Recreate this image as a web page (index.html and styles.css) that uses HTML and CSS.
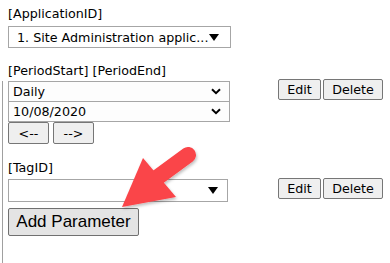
FILE: index.html
```html
<!DOCTYPE html>
<html lang="en">
<head>
    <meta charset="UTF-8">
    <meta name="viewport" content="width=device-width, initial-scale=1.0">
    <title>Parameters</title>
    <link rel="stylesheet" href="styles.css">
</head>
<body>
    <div class="page">
        <div class="label">[ApplicationID]</div>
        <div class="select-wrap app">
            <select class="sel sel-app">
                <option>1. Site Administration applic...</option>
            </select>
            <svg class="tri" width="10" height="7" viewBox="0 0 10 7"><path d="M0 0H10L5 7Z" fill="#000"/></svg>
        </div>

        <div class="label period-label">[PeriodStart] [PeriodEnd]</div>
        <div class="panel">
            <div class="row period-row">
                <div class="fields">
                    <div class="select-wrap">
                        <select class="sel sel-period"><option>Daily</option></select>
                        <svg class="chev" width="10" height="7" viewBox="0 0 10 7"><path d="M1 1.2L5 5.2L9 1.2" fill="none" stroke="#000" stroke-width="2"/></svg>
                    </div>
                    <div class="select-wrap second">
                        <select class="sel sel-period"><option>10/08/2020</option></select>
                        <svg class="chev" width="10" height="7" viewBox="0 0 10 7"><path d="M1 1.2L5 5.2L9 1.2" fill="none" stroke="#000" stroke-width="2"/></svg>
                    </div>
                    <div class="nav">
                        <button class="btn nav-btn">&lt;--</button>
                        <button class="btn nav-btn">--&gt;</button>
                    </div>
                </div>
                <div class="actions">
                    <button class="btn btn-edit">Edit</button>
                    <button class="btn btn-delete">Delete</button>
                </div>
            </div>

            <div class="label tag-label">[TagID]</div>
            <div class="row tag-row">
                <div class="select-wrap tag">
                    <select class="sel sel-tag"><option></option></select>
                    <svg class="tri" width="10" height="7" viewBox="0 0 10 7"><path d="M0 0H10L5 7Z" fill="#000"/></svg>
                </div>
                <div class="actions">
                    <button class="btn btn-edit">Edit</button>
                    <button class="btn btn-delete">Delete</button>
                </div>
            </div>

            <button class="btn btn-add">Add Parameter</button>
        </div>

        <!-- seta de destaque -->
        <svg class="arrow" width="100" height="80" viewBox="100 140 100 80">
            <defs>
                <filter id="sh" x="-20%" y="-20%" width="140%" height="140%">
                    <feDropShadow dx="1" dy="2" stdDeviation="1.5" flood-color="#000" flood-opacity="0.25"/>
                </filter>
            </defs>
            <g filter="url(#sh)">
                <line x1="188" y1="155" x2="158" y2="177" stroke="#fa4448" stroke-width="16" stroke-linecap="round"/>
                <path d="M143 158 L176 197 L122 207 Z" fill="#fa4448"/>
            </g>
        </svg>
    </div>
</body>
</html>
```

FILE: styles.css
```css
body {
    margin: 0;
    padding: 0;
    background: #fff;
    color: #000;
    font-family: 'DejaVu Sans', Verdana, sans-serif;
    font-size: 12.7px;
}

.page {
    position: relative;
    width: 390px;
    height: 263px;
    overflow: hidden;
    padding: 6px 7px 0 8px;
    box-sizing: border-box;
}

.label {
    line-height: 16px;
    height: 16px;
}

.select-wrap {
    position: relative;
}

.sel {
    appearance: none;
    -webkit-appearance: none;
    display: block;
    box-sizing: border-box;
    font-family: 'DejaVu Sans', Verdana, sans-serif;
    font-size: 12.7px;
    color: #000;
    background: #fff;
    border: 1px solid #a6a6a6;
    border-radius: 0;
    margin: 0;
    outline: none;
}

.app {
    margin-top: 4px;
    width: 223px;
}

.sel-app {
    width: 223px;
    height: 22px;
    padding: 0 0 0 8px;
}

.tri {
    position: absolute;
    right: 12px;
    top: 8px;
    pointer-events: none;
}

.chev {
    position: absolute;
    right: 9px;
    top: 7px;
    pointer-events: none;
}

.period-label {
    margin-top: 15px;
}

.panel {
    margin-left: -6px;
    padding-left: 5px;
    border-left: 1px solid #a0a0a0;
    margin-top: 2px;
    height: 190px;
}

.row {
    display: flex;
    align-items: flex-start;
}

.fields {
    width: 222px;
}

.sel-period {
    width: 222px;
    height: 21px;
    padding: 0 0 0 4px;
    background: #fdfdfd;
}

.second {
    margin-top: -1px;
}

.nav {
    display: flex;
    gap: 4px;
}

.btn {
    font-family: 'DejaVu Sans', Verdana, sans-serif;
    font-size: 12.7px;
    color: #000;
    background: #efefef;
    border: 1px solid #767676;
    border-radius: 2px;
    padding: 0;
    margin: 0;
    box-sizing: border-box;
}

.nav-btn {
    width: 41px;
    height: 22px;
}

.actions {
    margin-left: auto;
    display: flex;
    gap: 2px;
}

.period-row .actions {
    margin-top: -2px;
}

.btn-edit {
    width: 43px;
    height: 21px;
}

.btn-delete {
    width: 60px;
    height: 21px;
}

.tag-label {
    margin-top: 16px;
}

.tag-row {
    margin-top: 3px;
}

.tag {
    width: 220px;
}

.sel-tag {
    width: 220px;
    height: 23px;
}

.tag .tri {
    right: 10px;
}

.tag-row .actions {
    margin-top: -1px;
}

.btn-add {
    margin-top: 6px;
    width: 131px;
    height: 28px;
    font-family: 'Liberation Sans', Arial, sans-serif;
    font-size: 17px;
    background: #e4e4e4;
    border-color: #707070;
}

.arrow {
    position: absolute;
    left: 100px;
    top: 140px;
    pointer-events: none;
}
```
